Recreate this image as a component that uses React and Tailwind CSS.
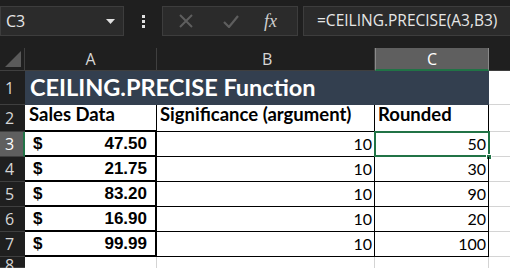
import React from "react";

const calibri = { fontFamily: "Lato, 'Open Sans', sans-serif" };

const rows = [
  { n: 3, v: "47.50", r: 50 },
  { n: 4, v: "21.75", r: 30 },
  { n: 5, v: "83.20", r: 90 },
  { n: 6, v: "16.90", r: 20 },
  { n: 7, v: "99.99", r: 100 },
];

function Toolbar() {
  return (
    <div className="h-[48px] bg-[#1f1f1f] flex items-start pt-[6px] font-['Open_Sans',sans-serif]">
      <div className="w-[124px] h-[30px] bg-[#2b2b2b] border border-[#3d3d3d] flex items-center justify-between pl-[5px] pr-[8px]">
        <span className="text-[16px] text-[#e6e6e6]">C3</span>
        <svg width="9" height="5" viewBox="0 0 9 5"><path d="M0 0h9L4.5 5z" fill="#e0e0e0" /></svg>
      </div>
      <div className="w-[38px] h-[30px] flex flex-col items-center justify-center gap-[2px]">
        <span className="w-[3px] h-[3px] bg-[#e0e0e0]" />
        <span className="w-[3px] h-[3px] bg-[#e0e0e0]" />
        <span className="w-[3px] h-[3px] bg-[#e0e0e0]" />
      </div>
      <div className="w-[136px] h-[30px] bg-[#2b2b2b] border border-[#3d3d3d] flex items-center">
        <svg className="ml-[16px]" width="14" height="14" viewBox="0 0 14 14">
          <path d="M1 1L13 13M13 1L1 13" stroke="#5e5e5e" strokeWidth="2" />
        </svg>
        <svg className="ml-[30px]" width="16" height="13" viewBox="0 0 16 13">
          <path d="M1 7L6 12L15 1" stroke="#5e5e5e" strokeWidth="2.2" fill="none" />
        </svg>
        <span className="ml-[25px] text-[18px] italic text-[#cfcfcf] font-['Liberation_Serif',serif]">fx</span>
      </div>
      <div className="ml-[5px] flex-1 h-[30px] bg-[#2b2b2b] border border-[#3d3d3d] border-r-0 flex items-center pl-[13px]">
        <span className="text-[15.5px] text-[#e6e6e6] whitespace-nowrap">=CEILING.PRECISE(A3,B3)</span>
      </div>
    </div>
  );
}

export default function App() {
  const hdr = "flex items-center justify-center text-[16px] text-[#d6d6d6] border-r border-[#3f3f3f] font-['Open_Sans',sans-serif]";
  const rh = "flex items-center pl-[5px] text-[16px] text-[#d6d6d6] border-b border-[#3f3f3f] font-['Open_Sans',sans-serif] bg-[#1f1f1f]";
  return (
    <div className="w-[510px] h-[268px] overflow-hidden bg-white">
      <Toolbar />
      <div className="grid grid-cols-[25px_132px_218px_114px_21px] grid-rows-[23px_34px_27px_25px_25px_25px_25px_25px_11px]">
        {/* column headers */}
        <div className="bg-[#1f1f1f] border-r border-b border-[#3f3f3f] flex items-end justify-end p-[3px]">
          <svg width="16" height="16" viewBox="0 0 16 16"><path d="M16 0V16H0z" fill="#5a5a5a" /></svg>
        </div>
        <div className={hdr + " bg-[#1f1f1f] border-b"}>A</div>
        <div className={hdr + " bg-[#1f1f1f] border-b justify-start pl-[105px]"}>B</div>
        <div className={hdr + " bg-[#5f5f5f] border-l border-[#8a8a8a] border-b-2 border-b-[#217346] text-white"}>C</div>
        <div className="bg-[#1f1f1f] border-b border-[#3f3f3f]" />

        {/* row 1 */}
        <div className={rh}>1</div>
        <div className="col-span-3 bg-[#333f4f] flex items-center pl-[5px] text-white font-bold text-[23.5px]" style={calibri}>
          CEILING.PRECISE Function
        </div>
        <div className="border-b border-[#d4d4d4]" />

        {/* row 2 */}
        <div className={rh}>2</div>
        <div className="border-r border-b-2 border-black flex items-end pb-[1px] pl-[4px] font-bold text-[18.5px] text-black" style={calibri}>Sales Data</div>
        <div className="border-r border-b border-black flex items-end pb-[2px] pl-[3px] font-bold text-[18.5px] text-black whitespace-nowrap" style={calibri}>Significance (argument)</div>
        <div className="border-r border-black flex items-end pb-[3px] pl-[3px] font-bold text-[18.5px] text-black" style={calibri}>Rounded</div>
        <div className="border-b border-[#d4d4d4]" />

        {rows.map((r) => (
          <React.Fragment key={r.n}>
            <div className={rh + (r.n === 3 ? " bg-[#5f5f5f] text-white border-r-2 border-r-[#217346]" : "")}>{r.n}</div>
            <div className="border-r-2 border-b-2 border-black flex items-center justify-between pl-[8px] pr-[8px] font-bold text-[17px] text-black font-['Liberation_Sans',Arial,sans-serif]">
              <span>$</span>
              <span>{r.v}</span>
            </div>
            <div className="border-r border-b border-black flex items-center justify-end pr-[2px] text-[16px] text-black" style={calibri}>10</div>
            <div className="relative border-r border-b border-black flex items-center justify-end pr-[2px] text-[16px] text-black" style={calibri}>
              {r.r}
              {r.n === 3 && (
                <>
                  <div className="absolute left-[-1px] top-[-1px] right-[-2px] bottom-[-1px] border-2 border-[#217346]" />
                  <div className="absolute right-[-4px] bottom-[-4px] w-[6px] h-[6px] bg-[#217346] border border-white" />
                </>
              )}
            </div>
            <div className="border-b border-[#d4d4d4]" />
          </React.Fragment>
        ))}

        {/* row 8 */}
        <div className={rh + " items-start text-[9px] leading-none"}>8</div>
        <div className="border-r border-[#d4d4d4]" />
        <div className="border-r border-[#d4d4d4]" />
        <div className="border-r border-[#d4d4d4]" />
        <div />
      </div>
    </div>
  );
}
